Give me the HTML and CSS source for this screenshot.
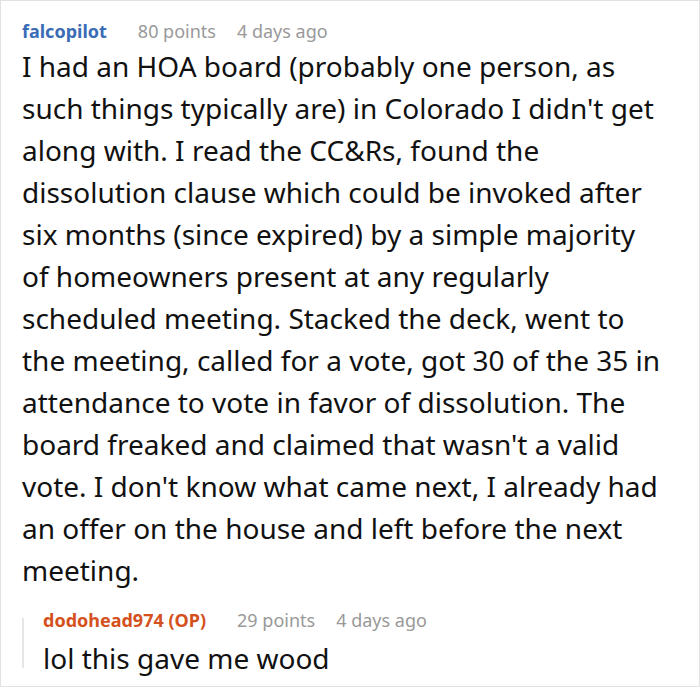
FILE: index.html
```html
<!DOCTYPE html>
<html>
<head>
<meta charset="utf-8">
<link rel="stylesheet" href="styles.css">
</head>
<body>
<div class="card">
  <div class="comment">
    <div class="meta">
      <span class="author">falcopilot</span>
      <span class="info">80 points</span>
      <span class="info">4 days ago</span>
    </div>
    <p class="text">I had an HOA board (probably one person, as such things typically are) in Colorado I didn't get along with. I read the CC&amp;Rs, found the dissolution clause which could be invoked after six months (since expired) by a simple majority of homeowners present at any regularly scheduled meeting. Stacked the deck, went to the meeting, called for a vote, got 30 of the 35 in attendance to vote in favor of dissolution. The board freaked and claimed that wasn't a valid vote. I don't know what came next, I already had an offer on the house and left before the next meeting.</p>
    <div class="reply">
      <div class="meta">
        <span class="author op">dodohead974 (OP)</span>
        <span class="info">29 points</span>
        <span class="info">4 days ago</span>
      </div>
      <p class="text reply-text">lol this gave me wood</p>
    </div>
  </div>
</div>
</body>
</html>
```
FILE: styles.css
```css
html, body {
  margin: 0;
  padding: 0;
  background: #fff;
}
.card {
  box-sizing: border-box;
  width: 700px;
  height: 687px;
  border: 1px solid #e2e2e2;
  padding: 16px 36px 0 21px;
  font-family: "Noto Sans", "Open Sans", sans-serif;
}
.meta {
  display: flex;
  gap: 21px;
  font-size: 18px;
  line-height: 28px;
  height: 28px;
  white-space: nowrap;
}
.author {
  font-weight: 700;
  color: #3a6cb6;
  margin-right: 10px;
}
.author.op {
  color: #d4511d;
}
.info {
  color: #999;
}
.text {
  margin: 0;
  font-size: 28px;
  line-height: 42px;
  color: #111;
}
.reply {
  position: relative;
  margin-top: 15px;
  padding-left: 21px;
}
.reply-text {
  margin-top: 3px;
}
.reply::before {
  content: "";
  position: absolute;
  left: 0;
  top: 12px;
  width: 2px;
  height: 50px;
  background: #e6e6e6;
}
```
